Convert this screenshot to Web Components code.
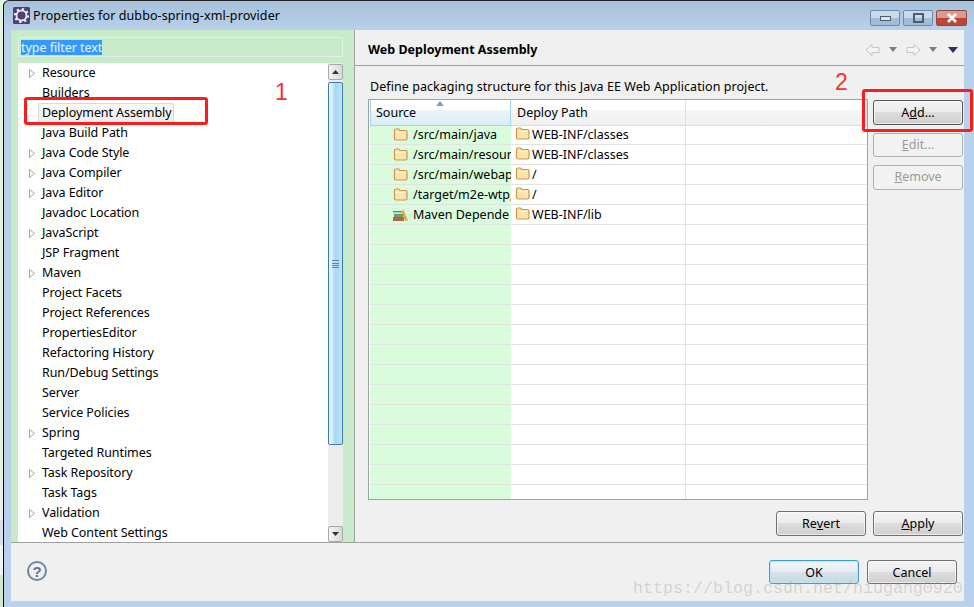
<!DOCTYPE html>
<html>
<head>
<meta charset="utf-8">
<title>Properties</title>
<style>
  html, body { margin: 0; padding: 0; height: 100%; overflow: hidden; }
  body { display: flex; width: 974px; height: 607px; font: 12.5px "Noto Sans", sans-serif; color: #000; }
  .strip { width: 3px; flex: none; background: linear-gradient(#e0f5e2 0 480px, #eeeeee 480px 520px, #d8e0ee 520px 545px, #f4f4f4 545px 575px, #cfe8cf 575px); }
</style>
</head>
<body>
<div class="strip"></div>
<prop-window>
  <span slot="title">Properties for dubbo-spring-xml-provider</span>

  <prop-tree slot="left">
    <tree-item arrow>Resource</tree-item>
    <tree-item>Builders</tree-item>
    <tree-item selected>Deployment Assembly</tree-item>
    <tree-item>Java Build Path</tree-item>
    <tree-item arrow>Java Code Style</tree-item>
    <tree-item arrow>Java Compiler</tree-item>
    <tree-item arrow>Java Editor</tree-item>
    <tree-item>Javadoc Location</tree-item>
    <tree-item arrow>JavaScript</tree-item>
    <tree-item>JSP Fragment</tree-item>
    <tree-item arrow>Maven</tree-item>
    <tree-item>Project Facets</tree-item>
    <tree-item>Project References</tree-item>
    <tree-item>PropertiesEditor</tree-item>
    <tree-item>Refactoring History</tree-item>
    <tree-item>Run/Debug Settings</tree-item>
    <tree-item>Server</tree-item>
    <tree-item>Service Policies</tree-item>
    <tree-item arrow>Spring</tree-item>
    <tree-item>Targeted Runtimes</tree-item>
    <tree-item arrow>Task Repository</tree-item>
    <tree-item>Task Tags</tree-item>
    <tree-item arrow>Validation</tree-item>
    <tree-item>Web Content Settings</tree-item>
  </prop-tree>

  <deploy-table slot="table" id="table">
    <deploy-row icon="folder" path="WEB-INF/classes">/src/main/java</deploy-row>
    <deploy-row icon="folder" path="WEB-INF/classes">/src/main/resour</deploy-row>
    <deploy-row icon="folder" path="/">/src/main/webap</deploy-row>
    <deploy-row icon="folder" path="/">/target/m2e-wtp,</deploy-row>
    <deploy-row icon="maven" path="WEB-INF/lib">Maven Depende</deploy-row>
  </deploy-table>

  <prop-button slot="side" style="height:25px" kind="default">A<u>d</u>d...</prop-button>
  <prop-button slot="side" style="height:24px;padding-bottom:2px" disabled><u>E</u>dit...</prop-button>
  <prop-button slot="side" style="height:25px;padding-bottom:2px" disabled><u>R</u>emove</prop-button>

  <prop-button slot="restore">Re<u>v</u>ert</prop-button>
  <prop-button slot="restore"><u>A</u>pply</prop-button>

  <prop-button slot="dialog" kind="focus" style="width:90px">OK</prop-button>
  <prop-button slot="dialog" style="width:90px">Cancel</prop-button>
</prop-window>

<script>
const FOLDER = `<svg width="15" height="13" viewBox="0 0 15 13"><path d="M1.5 2.5Q1.5 1 3 1H5.5L7 2.5H12.5Q14 2.5 14 4V10.5Q14 12 12.5 12H3Q1.5 12 1.5 10.5Z" fill="#fde3ae" stroke="#d0934a" stroke-width="1.2"/><path d="M2.5 4.5H13" stroke="#fff2d0"/></svg>`;
const MAVEN = `<svg width="15" height="11" viewBox="0 0 15 11"><rect x="0" y="7" width="11" height="4" fill="#ae6a42"/><rect x="1" y="4" width="9" height="3" fill="#6f9c62"/><rect x="0" y="1" width="10" height="1.5" fill="#2f8db5"/><rect x="0" y="2.5" width="10" height="1.5" fill="#c9dfe6"/><path d="M8 1L10.5 0L15 10.5L12.5 11Z" fill="#e8a63c"/></svg>`;

class PropWindow extends HTMLElement {
  constructor() {
    super();
    this.attachShadow({ mode: "open" });
    this.shadowRoot.innerHTML = `
      <style>
        :host { display: flex; flex-direction: column; flex: 1; min-width: 0; position: relative; box-sizing: border-box;
                border-left: 1px solid #000; border-top: 1px solid #222; border-top-left-radius: 6px;
                padding: 0 10px 6px 7px; background: linear-gradient(#a6c1dc, #b9d1ea 30px); }
        .title { height: 29px; flex: none; display: flex; align-items: center; gap: 3px; padding: 0 0 0 2px; margin-right: -3px; font-size: 12.5px; letter-spacing: .1px; }
        .title .text { flex: 1; }
        .caps { display: flex; gap: 3px; align-self: flex-start; margin-top: 9px; }
        .cap { width: 30px; height: 16px; box-sizing: border-box; border: 1px solid #6f8aa6; border-radius: 2px; display: flex; align-items: center; justify-content: center;
               background: linear-gradient(#c9daea 0 50%, #a3bdd8 50%); }
        .cap.close { width: 31px; border-color: #8c4a44; background: linear-gradient(#dc9a8e 0 50%, #bd4535 50%); }
        .client { flex: 1; min-height: 0; display: flex; flex-direction: column; background: #f0f0f0; }
        .main { height: 512px; flex: none; display: flex; }
        .left { width: 343px; flex: none; box-sizing: border-box; background: #c7ebc9; padding: 7px 11px 0 7px; display: flex; flex-direction: column; gap: 6px; overflow: hidden; }
        .filter { height: 20px; flex: none; box-sizing: border-box; border: 1px solid #e6efe6; padding: 2px 2px; line-height: 15px; }
        .filter span { display: block; width: max-content; background: #3399ff; color: #eaf4ff; height: 15px; letter-spacing: -.05px; }
        .sash { width: 1px; flex: none; background: #a0a0a0; }
        .right { flex: 1; min-width: 0; display: flex; flex-direction: column; }
        .head { height: 35px; flex: none; box-sizing: border-box; display: flex; align-items: center; padding: 4px 6px 0 13px; }
        .head b { flex: 1; font-size: 12.5px; font-weight: 700; }
        .nav { display: flex; align-items: center; gap: 0; }
        .rule { height: 1px; flex: none; background: #a0a0a0; }
        .desc { height: 33px; flex: none; box-sizing: border-box; padding: 12px 0 0 15px; line-height: 17px; letter-spacing: .06px; }
        .body { display: flex; gap: 5px; padding-left: 13px; height: 401px; flex: none; }
        .side { width: 90px; display: flex; flex-direction: column; gap: 8px; padding-top: 1px; }
        .restore { display: flex; justify-content: flex-end; gap: 7px; padding: 11px 1px 0 0; }
        .restore ::slotted(*) { width: 90px; height: 25px; }
        .bottom { flex: 1; box-sizing: border-box; border-top: 1px solid #a0a0a0; display: flex; align-items: flex-start; justify-content: space-between; padding: 17px 7px 0 16px; }
        .help { width: 20px; height: 20px; margin-top: 1px; box-sizing: border-box; border: 2px solid #6f87a4; border-radius: 50%; display: flex; align-items: center; justify-content: center; color: #5c7595; font: 700 15px "Liberation Sans", sans-serif; }
        .dlg { display: flex; gap: 8px; }
        .dlg ::slotted(*) { height: 24px; }
        .red { position: absolute; box-sizing: border-box; border: 3px solid #fb1c1c; border-radius: 3px; }
        .num { position: absolute; color: #f53030; font: 23px/23px "Liberation Sans", sans-serif; }
        .mark { position: absolute; left: 629px; top: 578px; color: rgba(120,120,120,.25); font: 16.67px/20px "Liberation Mono", monospace; white-space: nowrap; }
      </style>
      <div class="title">
        <svg width="17" height="17" viewBox="0 0 17 17"><rect x="0" y="0" width="17" height="17" rx="1.5" fill="#4b3f73"/><circle cx="8.5" cy="8.5" r="5" fill="none" stroke="#e4e2ea" stroke-width="2"/><circle cx="8.5" cy="8.5" r="6.6" fill="none" stroke="#f2f1f5" stroke-width="2" stroke-dasharray="2.2 3"/></svg>
        <span class="text"><slot name="title"></slot></span>
        <div class="caps">
          <div class="cap"><svg width="11" height="6" viewBox="0 0 11 6"><rect x=".5" y="1.5" width="10" height="4" fill="#dfe4ea" stroke="#4d5c6f"/></svg></div>
          <div class="cap"><svg width="11" height="10" viewBox="0 0 11 10"><rect x="1" y="1" width="9" height="8" fill="none" stroke="#4d5c6f" stroke-width="2"/></svg></div>
          <div class="cap close"><svg width="12" height="10" viewBox="0 0 12 10"><path d="M2 1L10 9M10 1L2 9" stroke="#fff" stroke-width="2.6"/></svg></div>
        </div>
      </div>
      <div class="client">
        <div class="main">
          <div class="left">
            <div class="filter"><span>type filter text</span></div>
            <slot name="left"></slot>
          </div>
          <div class="sash"></div>
          <div class="right">
            <div class="head">
              <b>Web Deployment Assembly</b>
              <div class="nav">
                <svg width="16" height="14" viewBox="0 0 16 14"><path d="M1 7L7 1.5V4.5H14V9.5H7V12.5Z" fill="#f4f4f4" stroke="#c6c6c6"/></svg>
                <svg style="margin:0 8px" width="8" height="5" viewBox="0 0 8 5"><path d="M0 0H8L4 5Z" fill="#7c7c7c"/></svg>
                <svg width="16" height="14" viewBox="0 0 16 14"><path d="M15 7L9 1.5V4.5H2V9.5H9V12.5Z" fill="#f4f4f4" stroke="#c6c6c6"/></svg>
                <svg style="margin:0 11px 0 8px" width="8" height="5" viewBox="0 0 8 5"><path d="M0 0H8L4 5Z" fill="#7c7c7c"/></svg>
                <svg width="10" height="6" viewBox="0 0 10 6"><path d="M0 0H10L5 6Z" fill="#3c2a66"/></svg>
              </div>
            </div>
            <div class="rule"></div>
            <div class="desc">Define packaging structure for this Java EE Web Application project.</div>
            <div class="body">
              <slot name="table"></slot>
              <div class="side"><slot name="side"></slot></div>
            </div>
            <div class="restore"><slot name="restore"></slot></div>
          </div>
        </div>
        <div class="bottom">
          <div class="help">?</div>
          <div class="dlg"><slot name="dialog"></slot></div>
        </div>
      </div>
      <div class="red" style="left:20px;top:96px;width:184px;height:28px"></div>
      <div class="red" style="left:858px;top:88px;width:111px;height:43px"></div>
      <div class="num" style="left:271px;top:80px">1</div>
      <div class="num" style="left:831px;top:70px">2</div>
      <div class="mark">https://blog.csdn.net/niugang0920</div>
    `;
  }
}

class PropTree extends HTMLElement {
  constructor() {
    super();
    this.attachShadow({ mode: "open" });
    this.shadowRoot.innerHTML = `
      <style>
        :host { display: flex; flex: 1; min-height: 0; background: #fff; overflow: hidden; letter-spacing: -.08px; }
        .items { flex: 1; min-width: 0; }
        .bar { width: 15px; flex: none; display: flex; flex-direction: column; padding-top: 1px; background: #ededed; box-sizing: border-box; }
        .btn { height: 16px; flex: none; box-sizing: border-box; border: 1px solid #a9a9a9; border-radius: 2px; background: linear-gradient(90deg, #f4f4f4, #d8d8d8); display: flex; align-items: center; justify-content: center; }
        .thumb { height: 363px; flex: none; margin-top: 2px; box-sizing: border-box; border: 1px solid #3a7db2; border-radius: 2px; background: linear-gradient(90deg, #e2f2fc 0 15%, #a9d8f5 50%, #bfe2f8); display: flex; align-items: center; justify-content: center; }
        .track { flex: 1; }
        .grip { width: 7px; height: 8px; background: repeating-linear-gradient(#4c8fb0 0 1px, transparent 1px 2.5px); }
      </style>
      <div class="items"><slot></slot></div>
      <div class="bar">
        <div class="btn"><svg width="7" height="4" viewBox="0 0 7 4"><path d="M0 4L3.5 0L7 4Z" fill="#333"/></svg></div>
        <div class="thumb"><div class="grip"></div></div>
        <div class="track"></div>
        <div class="btn"><svg width="7" height="4" viewBox="0 0 7 4"><path d="M0 0L3.5 4L7 0Z" fill="#333"/></svg></div>
      </div>
    `;
  }
}

class TreeItem extends HTMLElement {
  constructor() {
    super();
    this.attachShadow({ mode: "open" });
  }
  connectedCallback() {
    const arrow = this.hasAttribute("arrow")
      ? `<svg width="6" height="9" viewBox="0 0 6 9"><path d="M.5 .5L5.5 4.5L.5 8.5Z" fill="#fff" stroke="#a5a5a5"/></svg>`
      : "";
    this.shadowRoot.innerHTML = `
      <style>
        :host { display: block; height: 20px; line-height: 20px; white-space: nowrap; }
        .row { display: flex; align-items: center; height: 20px; }
        .tw { width: 24px; padding-left: 11px; box-sizing: border-box; display: flex; align-items: center; }
        .lb { padding: 0 3px 0 0; }
        :host([selected]) .lb { margin: -1px 0 0 -4px; padding: 0 2px 0 3px; height: 18px; line-height: 18px; border: 1px solid #d9d9d9; border-radius: 2px; background: linear-gradient(#fbfbfb, #ececec); }
      </style>
      <div class="row"><span class="tw">${arrow}</span><span class="lb"><slot></slot></span></div>
    `;
  }
}

class DeployTable extends HTMLElement {
  constructor() {
    super();
    this.attachShadow({ mode: "open" });
    this.shadowRoot.innerHTML = `
      <style>
        :host { display: block; width: 500px; height: 401px; box-sizing: border-box; border: 1px solid #a0a0a0; background: #fff; overflow: hidden; padding-left: 1px; }
        .hd { display: grid; grid-template-columns: 141px 175px 1fr; height: 24px; margin-bottom: 1px; line-height: 25px; }
        .hd div { background: linear-gradient(#fff 0 40%, #f6f7f8 40%, #eef0f2); border-right: 1px solid #dfdfdf; border-bottom: 1px solid #dcdcdc; box-sizing: border-box; padding-left: 6px; position: relative; }
        .hd .sorted { background: linear-gradient(#fff 0 40%, #edf5fb 40%, #dbecf7); border: 1px solid #a3d5f5; border-top: 0; border-bottom-color: #a3d5f5; padding-left: 5px; }
        .hd svg { position: absolute; left: 65px; top: 1px; }
      </style>
      <div class="hd">
        <div class="sorted">Source<svg width="8" height="5" viewBox="0 0 8 5"><path d="M0 5L4 0L8 5Z" fill="#7f9fb8"/></svg></div>
        <div>Deploy Path</div>
        <div></div>
      </div>
      <slot></slot>
    `;
  }
}

class DeployRow extends HTMLElement {
  constructor() {
    super();
    this.attachShadow({ mode: "open" });
  }
  connectedCallback() {
    const path = this.getAttribute("path");
    const kind = this.getAttribute("icon");
    const src = kind === "maven" ? MAVEN : kind === "folder" ? FOLDER : "";
    this.shadowRoot.innerHTML = `
      <style>
        :host { display: grid; grid-template-columns: 141px 175px 1fr; height: 20px; line-height: 19px; white-space: nowrap; }
        div { box-sizing: border-box; border-bottom: 1px solid #e3e3e3; display: flex; align-items: center; overflow: hidden; }
        .s { background: #d9fcdc; padding-left: 23px; gap: 5px; }
        .s svg { flex: none; }
        :host([icon="maven"]) .s svg { margin-top: 2px; }
        .d { padding-left: 4px; gap: 2px; border-right: 1px solid #e3e3e3; }
        .d svg { margin-top: -3px; flex: none; }
      </style>
      <div class="s">${src}<span><slot></slot></span></div>
      <div class="d">${path ? FOLDER : ""}<span>${path || ""}</span></div>
      <div></div>
    `;
  }
}

class PropButton extends HTMLElement {
  constructor() {
    super();
    this.attachShadow({ mode: "open" });
    this.shadowRoot.innerHTML = `
      <style>
        :host { display: flex; align-items: center; justify-content: center; box-sizing: border-box; border: 1px solid #707070; border-radius: 3px;
                background: linear-gradient(#f3f3f3 0, #ebebeb 48%, #dddddd 50%, #cfcfcf 100%); box-shadow: inset 0 0 0 1px rgba(255,255,255,.6); }
        :host([disabled]) { border-color: #b0b0b0; background: #f2f2f2; color: #9a9a9a; box-shadow: none; }
        :host([kind="default"]) { border-color: #555; }
        :host([kind="focus"]) { border-color: #3c9fcd; background: linear-gradient(#f0f5f9 0, #e6edf2 48%, #d6e1e9 50%, #cbd8e1 100%); box-shadow: inset 0 0 0 1px #bfe6f7; }
      </style>
      <slot></slot>
    `;
  }
}

customElements.define("prop-window", PropWindow);
customElements.define("prop-tree", PropTree);
customElements.define("tree-item", TreeItem);
customElements.define("deploy-table", DeployTable);
customElements.define("deploy-row", DeployRow);
customElements.define("prop-button", PropButton);

// empty rows fill the rest of the table
const table = document.getElementById("table");
for (let i = 0; i < 14; i++) {
  table.appendChild(document.createElement("deploy-row"));
}
</script>
</body>
</html>
